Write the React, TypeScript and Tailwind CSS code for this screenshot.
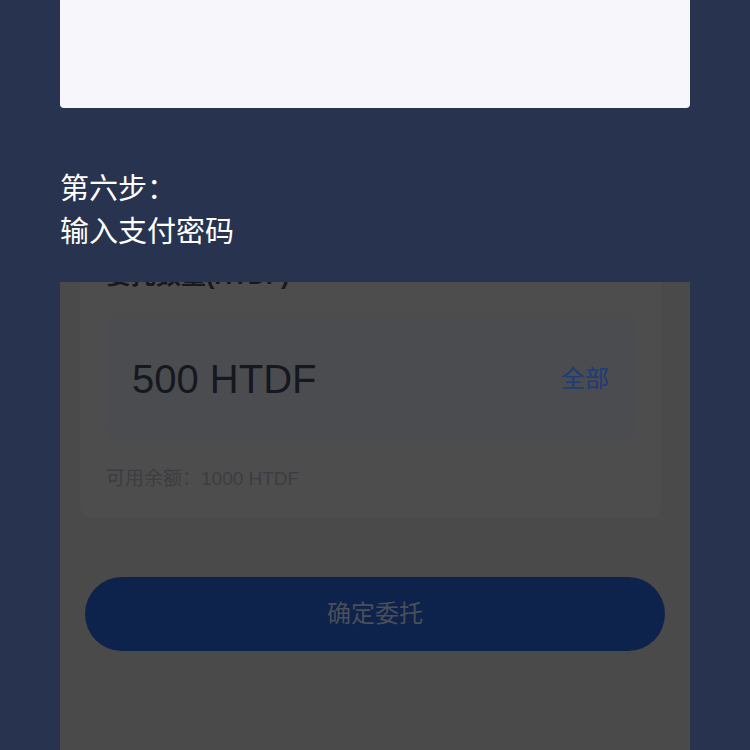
export default function App() {
  return (
    <div className="min-h-[750px] bg-[#283350] px-[60px] font-['Liberation_Sans','Noto_Sans_CJK_SC',sans-serif]">
      {/* 上一步的截图底部 */}
      <div className="h-[108px] rounded-b-[4px] bg-[#f7f6fb]" />

      <div className="mt-[60px] text-[29px] leading-[43px] text-white">
        <p>第六步：</p>
        <p>输入支付密码</p>
      </div>

      {/* 截图：带遮罩的委托页面 */}
      <div className="mt-[28px] h-[468px] overflow-hidden bg-[#4a4a4a]">
        <div className="-mt-[40px] ml-[20px] w-[581px] rounded-[12px] bg-[#4d4d4d] px-[26px] pb-[27px] pt-[17px]">
          <p className="text-[25px] font-bold leading-[32px] text-[#15181e]">委托数量(HTDF)</p>
          <div className="mt-[27px] flex h-[122px] items-center justify-between rounded-[10px] bg-[#4b4c4f] px-[26px]">
            <span className="text-[40px] text-[#15181e]">500 HTDF</span>
            <span className="text-[24px] text-[#1e3c78]">全部</span>
          </div>
          <p className="mt-[27px] text-[19px] leading-[24px] text-[#3b3d42]">可用余额：1000 HTDF</p>
        </div>
        <button
          type="button"
          className="ml-[25px] mt-[59px] flex h-[74px] w-[580px] items-center justify-center rounded-full bg-[#0e234b] text-[24px] text-[#4b4f59]"
        >
          确定委托
        </button>
      </div>
    </div>
  );
}
